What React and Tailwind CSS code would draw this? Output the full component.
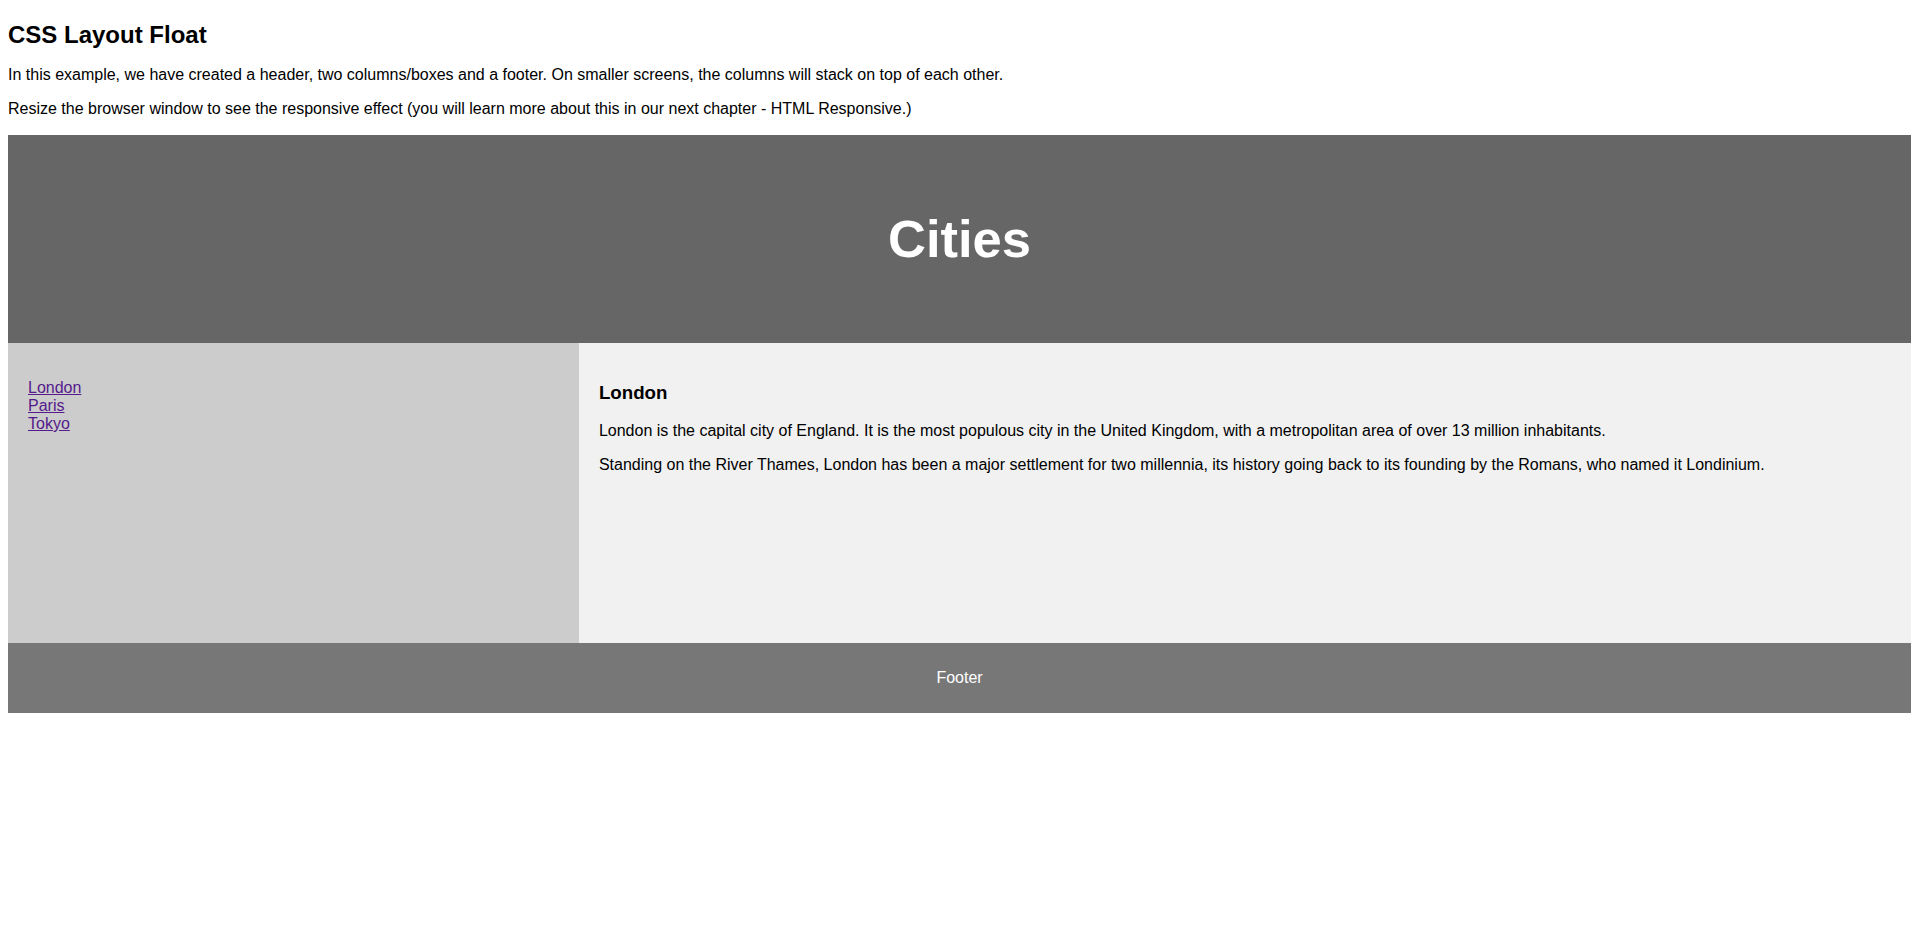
import React from 'react';

const cities = ['London', 'Paris', 'Tokyo'];

function App() {
    return (
        <div className="min-h-screen bg-white px-[8px] pb-[8px] pt-[21px] font-['Liberation_Sans',Arial,sans-serif] text-[16px] leading-[normal] text-black">
            <h2 className="m-0 h-[27px] text-[24px] font-bold leading-[27px]">CSS Layout Float</h2>
            <p className="mt-[18px] mb-[16px] h-[18px] leading-[18px]">
                In this example, we have created a header, two columns/boxes and a footer. On smaller screens, the columns will stack on top of each other.
            </p>
            <p className="mb-[17px] h-[18px] leading-[18px]">
                Resize the browser window to see the responsive effect (you will learn more about this in our next chapter - HTML Responsive.)
            </p>

            <header className="h-[208px] bg-[#666] px-[30px] pt-[74px] text-center text-white">
                <h2 className="m-0 text-[52.5px] font-bold leading-[60px]">Cities</h2>
            </header>

            <section className="flex">
                <nav className="h-[300px] w-[30%] bg-[#ccc] p-[20px]">
                    <ul className="mt-[16px] list-none p-0">
                        {cities.map((city) => (
                            <li key={city}>
                                <a href="#" className="text-[#551a8b] underline">{city}</a>
                            </li>
                        ))}
                    </ul>
                </nav>
                <article className="h-[300px] w-[70%] bg-[#f1f1f1] p-[20px]">
                    <h1 className="my-[18.72px] text-[18.72px] font-bold">London</h1>
                    <p className="mb-[16px]">
                        London is the capital city of England. It is the most populous city in the United Kingdom, with a metropolitan area of over 13 million inhabitants.
                    </p>
                    <p>
                        Standing on the River Thames, London has been a major settlement for two millennia, its history going back to its founding by the Romans, who named it Londinium.
                    </p>
                </article>
            </section>

            <footer className="flex h-[70px] items-center justify-center bg-[#777] text-white">
                <p>Footer</p>
            </footer>
        </div>
    );
}

export default App;
